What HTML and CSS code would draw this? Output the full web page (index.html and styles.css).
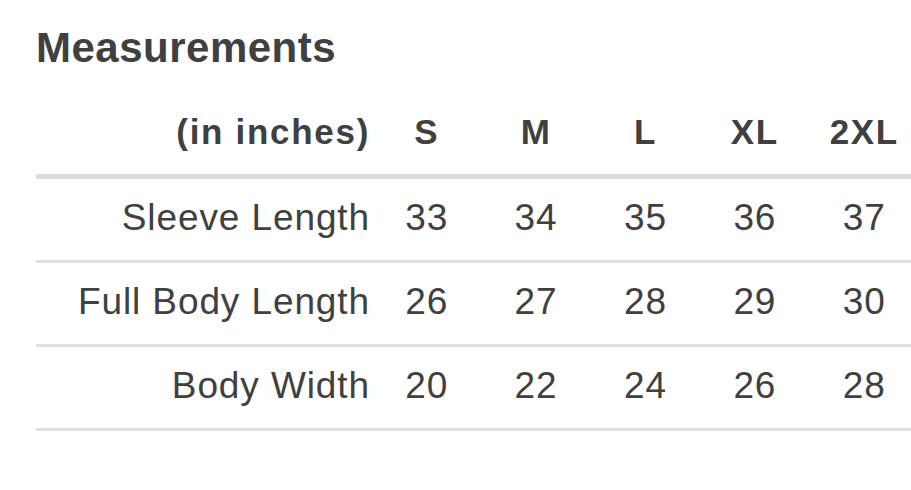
FILE: index.html
```html
<!DOCTYPE html>
<html lang="en">
<head>
<meta charset="utf-8">
<title>Measurements</title>
<link rel="stylesheet" href="styles.css">
</head>
<body>
<div class="page">
  <h2 class="title">Measurements</h2>
  <table class="sizes">
    <colgroup>
      <col class="col-label">
      <col class="col-size"><col class="col-size"><col class="col-size"><col class="col-size"><col class="col-size">
    </colgroup>
    <thead>
      <tr>
        <th class="label">(in inches)</th>
        <th>S</th><th>M</th><th>L</th><th>XL</th><th>2XL</th>
      </tr>
    </thead>
    <tbody>
      <tr>
        <td class="label">Sleeve Length</td>
        <td>33</td><td>34</td><td>35</td><td>36</td><td>37</td>
      </tr>
      <tr>
        <td class="label">Full Body Length</td>
        <td>26</td><td>27</td><td>28</td><td>29</td><td>30</td>
      </tr>
      <tr>
        <td class="label">Body Width</td>
        <td>20</td><td>22</td><td>24</td><td>26</td><td>28</td>
      </tr>
    </tbody>
  </table>
</div>
</body>
</html>
```
FILE: styles.css
```css
html, body {
  margin: 0;
  padding: 0;
  background: #ffffff;
  overflow: hidden;
}

.page {
  padding-left: 36px;
  font-family: "Liberation Sans", Arial, sans-serif;
  color: #404040;
}

.title {
  margin: 24px 0 40px;
  font-size: 42px;
  line-height: 48px;
  font-weight: 700;
  letter-spacing: 0.5px;
}

.sizes {
  border-collapse: collapse;
  table-layout: fixed;
  width: 883px;
}

.col-label {
  width: 336px;
}

.col-size {
  width: 109.4px;
}

.sizes th {
  font-size: 35px;
  line-height: 40px;
  font-weight: 700;
  letter-spacing: 1.7px;
  text-align: center;
  padding: 0 0 22px;
  border-bottom: 5px solid #dcdce0;
}

.sizes td {
  font-size: 37px;
  line-height: 42px;
  font-weight: 400;
  letter-spacing: 0.9px;
  text-align: center;
  padding: 18px 0 21px;
  border-bottom: 3px solid #dfdfe2;
}

.sizes .label {
  text-align: right;
  padding-right: 2px;
}
```
